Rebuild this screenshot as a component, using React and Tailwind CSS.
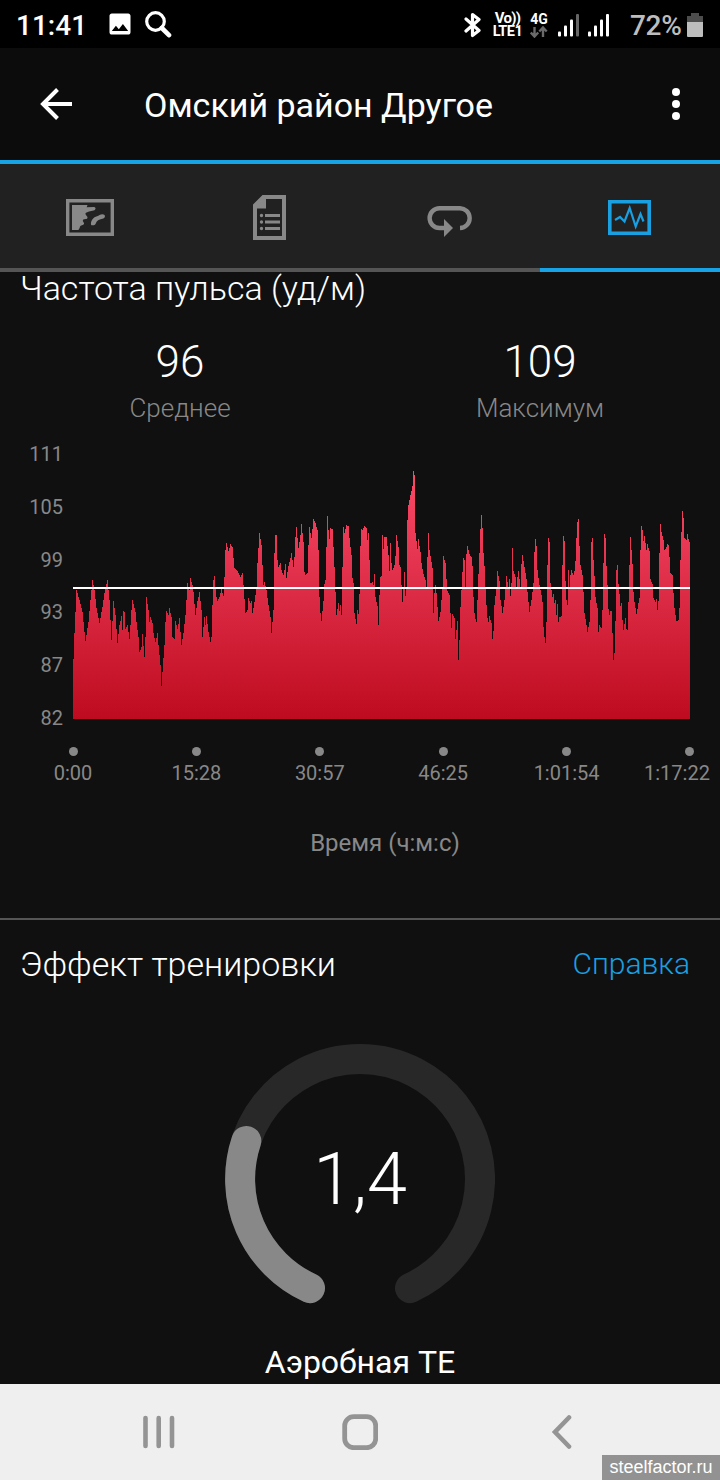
import { MdImage } from "react-icons/md";

const heartRate = [
  [0, 209], [1, 183], [3, 140], [6, 150], [9, 162], [10, 172], [12, 191], [15, 172], [17, 150], [19, 130], [21, 140], [23, 158],
  [26, 173], [29, 157], [31, 143], [34, 130], [36, 150], [38, 190], [40, 151], [42, 165], [44, 193], [46, 175], [48, 166], [49, 180],
  [50, 161], [51, 162], [52, 179], [54, 175], [56, 189], [58, 160], [59, 150], [62, 162], [63, 172], [65, 187], [66, 202], [68, 197],
  [69, 184], [71, 207], [72, 187], [73, 147], [75, 160], [76, 172], [77, 167], [79, 173], [80, 183], [82, 192], [84, 183], [85, 195],
  [87, 215], [88, 236], [90, 208], [91, 195], [92, 172], [93, 161], [95, 165], [96, 158], [98, 167], [99, 187], [101, 189], [102, 171],
  [104, 179], [106, 168], [108, 195], [110, 183], [112, 165], [113, 150], [114, 133], [116, 140], [117, 128], [119, 135], [120, 142],
  [122, 165], [124, 151], [126, 142], [128, 160], [129, 187], [131, 167], [132, 175], [133, 166], [135, 182], [137, 192], [138, 187],
  [139, 155], [140, 130], [141, 126], [143, 147], [144, 151], [146, 147], [148, 139], [150, 146], [151, 127], [152, 100], [153, 93],
  [155, 101], [157, 94], [159, 97], [160, 108], [161, 118], [164, 121], [167, 127], [169, 123], [170, 135], [172, 163], [174, 160],
  [175, 148], [177, 153], [178, 151], [179, 163], [181, 152], [183, 138], [184, 113], [186, 83], [188, 95], [189, 115], [190, 135],
  [191, 132], [193, 140], [195, 155], [197, 167], [198, 183], [200, 160], [201, 103], [202, 85], [203, 85], [204, 110], [205, 117],
  [207, 113], [208, 120], [210, 125], [212, 114], [213, 128], [215, 116], [217, 108], [218, 103], [220, 117], [221, 107], [222, 87],
  [223, 77], [225, 98], [227, 85], [228, 74], [230, 92], [231, 122], [232, 125], [234, 123], [235, 95], [236, 77], [238, 88],
  [240, 69], [242, 73], [244, 80], [245, 100], [246, 147], [247, 163], [248, 171], [250, 151], [251, 134], [252, 130], [253, 97],
  [254, 66], [255, 80], [256, 89], [257, 78], [259, 79], [260, 97], [261, 117], [262, 142], [263, 165], [265, 153], [266, 161],
  [267, 155], [268, 165], [269, 117], [270, 77], [271, 83], [273, 75], [275, 76], [276, 88], [278, 105], [279, 128], [280, 133],
  [281, 163], [283, 174], [284, 160], [285, 164], [286, 144], [287, 96], [288, 79], [289, 80], [291, 76], [293, 78], [294, 90],
  [295, 83], [296, 110], [297, 133], [299, 132], [300, 135], [301, 124], [302, 147], [304, 156], [305, 175], [306, 145], [307, 127],
  [308, 126], [309, 85], [310, 99], [311, 87], [313, 87], [315, 105], [316, 121], [317, 93], [318, 113], [319, 120], [321, 115],
  [322, 106], [323, 85], [325, 97], [326, 115], [327, 117], [328, 135], [329, 152], [330, 138], [331, 122], [332, 146], [333, 137],
  [334, 70], [335, 55], [337, 45], [339, 36], [340, 21], [341, 25], [342, 83], [344, 99], [345, 89], [347, 102], [348, 113],
  [350, 124], [352, 130], [353, 137], [354, 107], [355, 83], [356, 100], [358, 112], [359, 118], [360, 163], [361, 143], [362, 135],
  [363, 143], [364, 157], [365, 171], [367, 162], [368, 150], [369, 137], [370, 106], [372, 113], [373, 129], [374, 141], [376, 145],
  [377, 163], [378, 178], [379, 164], [381, 168], [382, 189], [384, 171], [385, 210], [386, 190], [387, 157], [389, 122], [390, 108],
  [391, 110], [392, 137], [393, 104], [394, 96], [396, 104], [398, 107], [399, 116], [400, 147], [401, 163], [402, 169], [403, 172],
  [404, 150], [405, 124], [406, 103], [407, 79], [408, 65], [409, 78], [410, 103], [411, 116], [412, 137], [413, 155], [414, 168],
  [415, 172], [416, 166], [418, 173], [419, 189], [420, 181], [421, 155], [423, 137], [424, 121], [426, 131], [427, 150], [428, 156],
  [429, 163], [431, 150], [432, 137], [433, 126], [435, 137], [436, 129], [437, 146], [438, 133], [439, 98], [440, 121], [442, 127],
  [443, 137], [444, 127], [445, 121], [447, 137], [448, 114], [449, 105], [451, 117], [453, 129], [454, 142], [456, 162], [458, 150],
  [460, 133], [461, 102], [462, 89], [463, 96], [464, 120], [466, 135], [468, 145], [469, 152], [470, 177], [471, 187], [472, 193],
  [473, 172], [474, 115], [475, 88], [476, 92], [477, 133], [479, 147], [480, 144], [481, 153], [482, 150], [483, 165], [484, 154],
  [485, 172], [486, 167], [488, 166], [489, 115], [490, 86], [491, 91], [492, 131], [493, 150], [494, 155], [495, 120], [496, 137],
  [497, 125], [498, 120], [500, 125], [501, 121], [502, 111], [503, 88], [504, 72], [505, 69], [506, 96], [507, 115], [509, 125],
  [510, 142], [511, 163], [513, 175], [514, 182], [516, 172], [517, 150], [518, 92], [519, 88], [520, 110], [521, 126], [522, 147],
  [524, 158], [525, 182], [526, 175], [528, 178], [529, 160], [530, 113], [531, 84], [532, 88], [533, 116], [534, 135], [535, 159],
  [536, 165], [537, 161], [538, 161], [539, 183], [540, 210], [541, 203], [542, 171], [543, 120], [544, 115], [545, 134], [546, 144],
  [547, 156], [548, 153], [549, 170], [550, 180], [552, 168], [553, 179], [554, 180], [555, 152], [556, 115], [557, 87], [558, 100],
  [559, 114], [560, 142], [561, 152], [563, 164], [565, 153], [566, 148], [567, 100], [568, 76], [569, 80], [570, 91], [571, 86],
  [573, 100], [574, 94], [576, 101], [577, 129], [579, 134], [580, 148], [582, 152], [583, 149], [584, 160], [585, 151], [586, 103],
  [587, 74], [588, 82], [590, 90], [591, 100], [593, 97], [594, 94], [595, 95], [596, 107], [597, 123], [599, 125], [600, 143],
  [601, 158], [603, 171], [605, 170], [606, 158], [607, 110], [608, 82], [609, 61], [610, 68], [611, 88], [613, 90], [614, 84],
  [615, 89], [616, 92],
];

// one bar per pixel column
const buildArea = (points) => {
  let d = "M0 269";
  points.forEach(([x, y], i) => {
    const [nx, ny] = points[i + 1] ?? [617, y];
    for (let c = x; c < nx; c++) {
      const v = Math.round(y + ((ny - y) * (c - x)) / (nx - x));
      d += `V${v}H${c + 1}`;
    }
  });
  return `${d}V269Z`;
};

const levels = ["111", "105", "99", "93", "87", "82"];
const times = ["0:00", "15:28", "30:57", "46:25", "1:01:54", "1:17:22"];

const Signal = ({ dim }) => (
  <svg width="22" height="24" viewBox="0 0 22 24" fill="#fff">
    <rect x="0" y="18.500" width="3" height="5" rx="1" />
    <rect x="6" y="12.500" width="3" height="11" rx="1" />
    <rect x="12" y="6.500" width="3" height="17" rx="1" />
    <rect x="18" y="1" width="3" height="22.500" rx="1" fill={dim ? "#666" : "#fff"} />
  </svg>
);

const StatusBar = () => (
  <div className="flex h-12 items-center bg-black pt-px pl-4 text-white">
    <span className="w-[90px] pt-0.5 text-[28px] leading-none font-medium">11:41</span>
    <MdImage className="-mt-0.5 size-7 shrink-0" />
    <svg className="ml-[10px] shrink-0" width="28" height="28" viewBox="0 0 28 28" fill="none" stroke="#fff">
      <circle cx="11.500" cy="10.500" r="8.800" strokeWidth="3.200" />
      <path d="M17.800 17l7.200 7.200" strokeWidth="4.600" strokeLinecap="round" />
    </svg>
    <svg className="ml-[292px] shrink-0" width="18" height="26" viewBox="0 0 18 26" fill="none" stroke="#fff" strokeWidth="3.200" strokeLinejoin="round" strokeLinecap="round">
      <path d="M2 7l13 11.500-6.500 5V2.500L15 7.500 2 19" />
    </svg>
    <div className="ml-[10px] flex w-[31px] flex-col items-center text-[15px] leading-[13px] font-bold">
      <span className="tracking-[-0.8px]">Vo))</span>
      <span className="text-[14.5px] tracking-[-0.5px]">LTE1</span>
    </div>
    <div className="ml-[6px] flex w-5 flex-col items-center">
      <span className="text-[14px] leading-[14px] font-bold">4G</span>
      <svg width="18" height="12" viewBox="0 0 18 12" fill="none" stroke="#6a6a6a" strokeWidth="2.400">
        <path d="M4.500 1v9M0.800 6.500l3.700 4 3.700-4M13 11V2M9.300 5.500l3.700-4 3.700 4" />
      </svg>
    </div>
    <div className="ml-[9px] flex gap-[8px]">
      <Signal dim />
      <Signal />
    </div>
    <span className="ml-[20px] w-[57px] pt-0.5 text-[28px] leading-none font-medium tracking-[-0.3px] text-[#bdbdbd]">72%</span>
    <svg width="16" height="24" viewBox="0 0 16 24">
      <path d="M4 0h8v3h4v7H0V3h4z" fill="#4d4d4d" />
      <path d="M0 9h16v14a1 1 0 0 1-1 1H1a1 1 0 0 1-1-1z" fill="#bdbdbd" />
    </svg>
  </div>
);

const TopBar = () => (
  <header className="flex h-[116px] items-center border-b-4 border-[#17a3e6] bg-[#0c0c0c]">
    <svg className="ml-10" width="34" height="34" viewBox="0 0 34 34" fill="none" stroke="#fff" strokeWidth="4">
      <path d="M32 17H4M17.500 2.500L3 17l14.500 14.500" />
    </svg>
    <h1 className="ml-[70px] flex-1 pt-[3px] text-[34px] whitespace-nowrap text-white">Омский район Другое</h1>
    <svg className="mr-10" width="8" height="34" viewBox="0 0 8 34" fill="#fff" overflow="visible">
      <circle cx="4" cy="5" r="4" />
      <circle cx="4" cy="17" r="4" />
      <circle cx="4" cy="29" r="4" />
    </svg>
  </header>
);

const MapIcon = () => (
  <svg width="48" height="37" viewBox="0 0 48 37">
    <path d="M1.700 1.700h44.600v33.600H1.700z" fill="none" stroke="#888" strokeWidth="3.400" />
    <path d="M6 6h15.500l-.8 2.200 7.300-.2c2.600.4 1.600 3.200-.4 3.500l-4.600 1c-1.500 1-3.700.7-3.500 2.500.2 1.500 2 1.700 2 3.500 0 2.300-3.500 1-4.500 2.500-.8 2 1.500 2 1 4-.5 1.500-3.500 1-4 2.500-.3 1.500-1 3.500-2 3.500H6z" fill="#888" />
    <path d="M25 25.500c-.5-4 2.500-7.500 6-8.300 2-.4 3-2 5.500-2 2.800 0 3.500 3 .8 4.200-2 .9-5 1-6.500 3-1 1.400-1 3.300-3 3.800-1.300.3-2.600.3-2.800-.7z" fill="#888" />
  </svg>
);

const NotesIcon = () => (
  <svg className="-ml-px" width="33" height="45" viewBox="0 0 33 45">
    <path d="M9.500 0H33v45H0V9.500zM13 4v9.500H4V41h25V4z" fill="#888" fillRule="evenodd" />
    <path d="M12 20.500h15M12 27h15M12 33.500h15" stroke="#888" strokeWidth="3" />
    <path d="M8.500 20.500h0M8.500 27h0M8.500 33.500h0" stroke="#888" strokeWidth="3.400" strokeLinecap="round" />
  </svg>
);

const LoopIcon = () => (
  <svg className="mt-[9px] -ml-px" width="45" height="32" viewBox="0 0 45 32">
    <path d="M18 22h-5.500a9.900 9.900 0 0 1 0-19.800h20a9.900 9.900 0 0 1 .5 19.800" fill="none" stroke="#888" strokeWidth="4.400" />
    <path d="M17 13l9 9-9 9z" fill="#888" />
  </svg>
);

const PulseIcon = () => (
  <svg className="-ml-px" width="43" height="35" viewBox="0 0 43 35" fill="none" stroke="#1a9fe0">
    <path d="M1.800 1.800h39.400v31.400H1.800z" strokeWidth="3.600" />
    <path d="M7 20l5-3 4.500 4.500L21.700 8l6 18.500 4.800-12.500 3 7.500" strokeWidth="2.200" />
  </svg>
);

const tabs = [
  { id: "map", icon: MapIcon },
  { id: "notes", icon: NotesIcon },
  { id: "laps", icon: LoopIcon },
  { id: "charts", icon: PulseIcon, active: true },
];

const Tabs = () => (
  <nav className="grid h-[108px] grid-cols-4 bg-[#212121]">
    {tabs.map(({ id, icon: Icon, active }) => (
      <button key={id} type="button" className={`flex items-center justify-center border-b-4 pt-0.5 ${active ? "border-[#17a3e6]" : "border-[#555]"}`}>
        <Icon />
      </button>
    ))}
  </nav>
);

const Stat = ({ value, label }) => (
  <div className="flex flex-col items-center">
    <span className="h-[52px] text-[44px] leading-[52px] font-light text-white">{value}</span>
    <span className="mt-1 text-[26px] leading-[32px] font-light text-[#888]">{label}</span>
  </div>
);

const HeartChart = () => (
  <div>
    <div className="flex h-[286px]">
      <div className="flex w-[63px] flex-col justify-between text-right text-[20px] leading-[22px] text-[#888]">
        {levels.map((level) => <span key={level}>{level}</span>)}
      </div>
      <svg className="mt-[7px] ml-[10px]" width="617" height="270" viewBox="0 0 617 270" shapeRendering="crispEdges">
        <defs>
          <linearGradient id="pulse" x1="0" y1="0" x2="0" y2="269" gradientUnits="userSpaceOnUse">
            <stop offset="0" stopColor="#ff5070" />
            <stop offset="1" stopColor="#be0b1f" />
          </linearGradient>
        </defs>
        <path d={buildArea(heartRate)} fill="url(#pulse)" />
        <rect x="0" y="137" width="617" height="2" fill="#fff" />
      </svg>
    </div>
    <div className="mt-[18px] ml-[73px] flex w-[617px] justify-between text-[20px] leading-6 text-[#888]">
      {times.map((time, i) => (
        <div key={time} className="flex w-0 flex-col items-center">
          <span className="size-[9px] shrink-0 rounded-full bg-[#888]" />
          <span className={`mt-[5px] ${i === times.length - 1 ? "-translate-x-[13px]" : ""}`}>{time}</span>
        </div>
      ))}
    </div>
    <p className="mt-[42px] ml-[50px] text-center text-[24px] leading-[32px] text-[#888]">Время (ч:м:с)</p>
  </div>
);

const Gauge = () => (
  <div className="grid place-items-center">
    <svg className="col-start-1 row-start-1" width="270" height="270" viewBox="0 0 270 270" fill="none" strokeWidth="30" strokeLinecap="round">
      <path d="M85 244.100A120 120 0 1 1 185 244.100" stroke="#282828" />
      <path d="M85 244.100A120 120 0 0 1 21.300 97" stroke="#888" />
    </svg>
    <span className="col-start-1 row-start-1 pt-0.5 text-[72px] leading-none font-light text-white">1,4</span>
  </div>
);

const NavBar = () => (
  <footer className="relative h-24 bg-[#efefef]">
    <div className="flex h-full items-center pl-[142px]">
      <svg width="33" height="36" viewBox="0 0 33 36" stroke="#949494" strokeWidth="4.600" strokeLinecap="round">
        <path d="M3.500 4v28M16.700 4v28M30 4v28" />
      </svg>
      <svg className="ml-[167px]" width="36" height="36" viewBox="0 0 36 36" fill="none" stroke="#949494" strokeWidth="4.800">
        <rect x="2.700" y="2.700" width="31" height="31" rx="9" />
      </svg>
      <svg className="ml-[173px]" width="22" height="34" viewBox="0 0 22 34" fill="none" stroke="#949494" strokeWidth="4.600" strokeLinecap="round">
        <path d="M18 2.500L4 17l14 14.500" />
      </svg>
    </div>
    <span className="absolute right-0 bottom-0 flex h-[25px] w-[118px] items-center justify-center bg-[#929292] font-['Liberation_Sans'] text-[18px] text-white">steelfactor.ru</span>
  </footer>
);

export default function App() {
  return (
    <div className="flex h-[1480px] w-[720px] flex-col overflow-hidden bg-[#101010] font-[Roboto,sans-serif]">
      <StatusBar />
      <TopBar />
      <Tabs />
      <main className="h-[1112px] overflow-hidden">
        <section className="h-[648px] border-b-2 border-[#555]">
          <h2 className="h-[64px] pl-5 text-[34px] leading-[32px] font-light text-white">Частота пульса (уд/м)</h2>
          <div className="grid grid-cols-2">
            <Stat value="96" label="Среднее" />
            <Stat value="109" label="Максимум" />
          </div>
          <div className="mt-[19px]">
            <HeartChart />
          </div>
        </section>
        <section>
          <div className="flex h-[124px] items-start justify-between pt-6 pr-[30px] pl-5 leading-10 font-light">
            <h2 className="text-[34px] text-white">Эффект тренировки</h2>
            <button type="button" className="text-[30px] text-[#1a9fe0]">Справка</button>
          </div>
          <Gauge />
          <p className="mt-[28px] text-center text-[32px] leading-10 text-white">Аэробная TE</p>
        </section>
      </main>
      <NavBar />
    </div>
  );
}
